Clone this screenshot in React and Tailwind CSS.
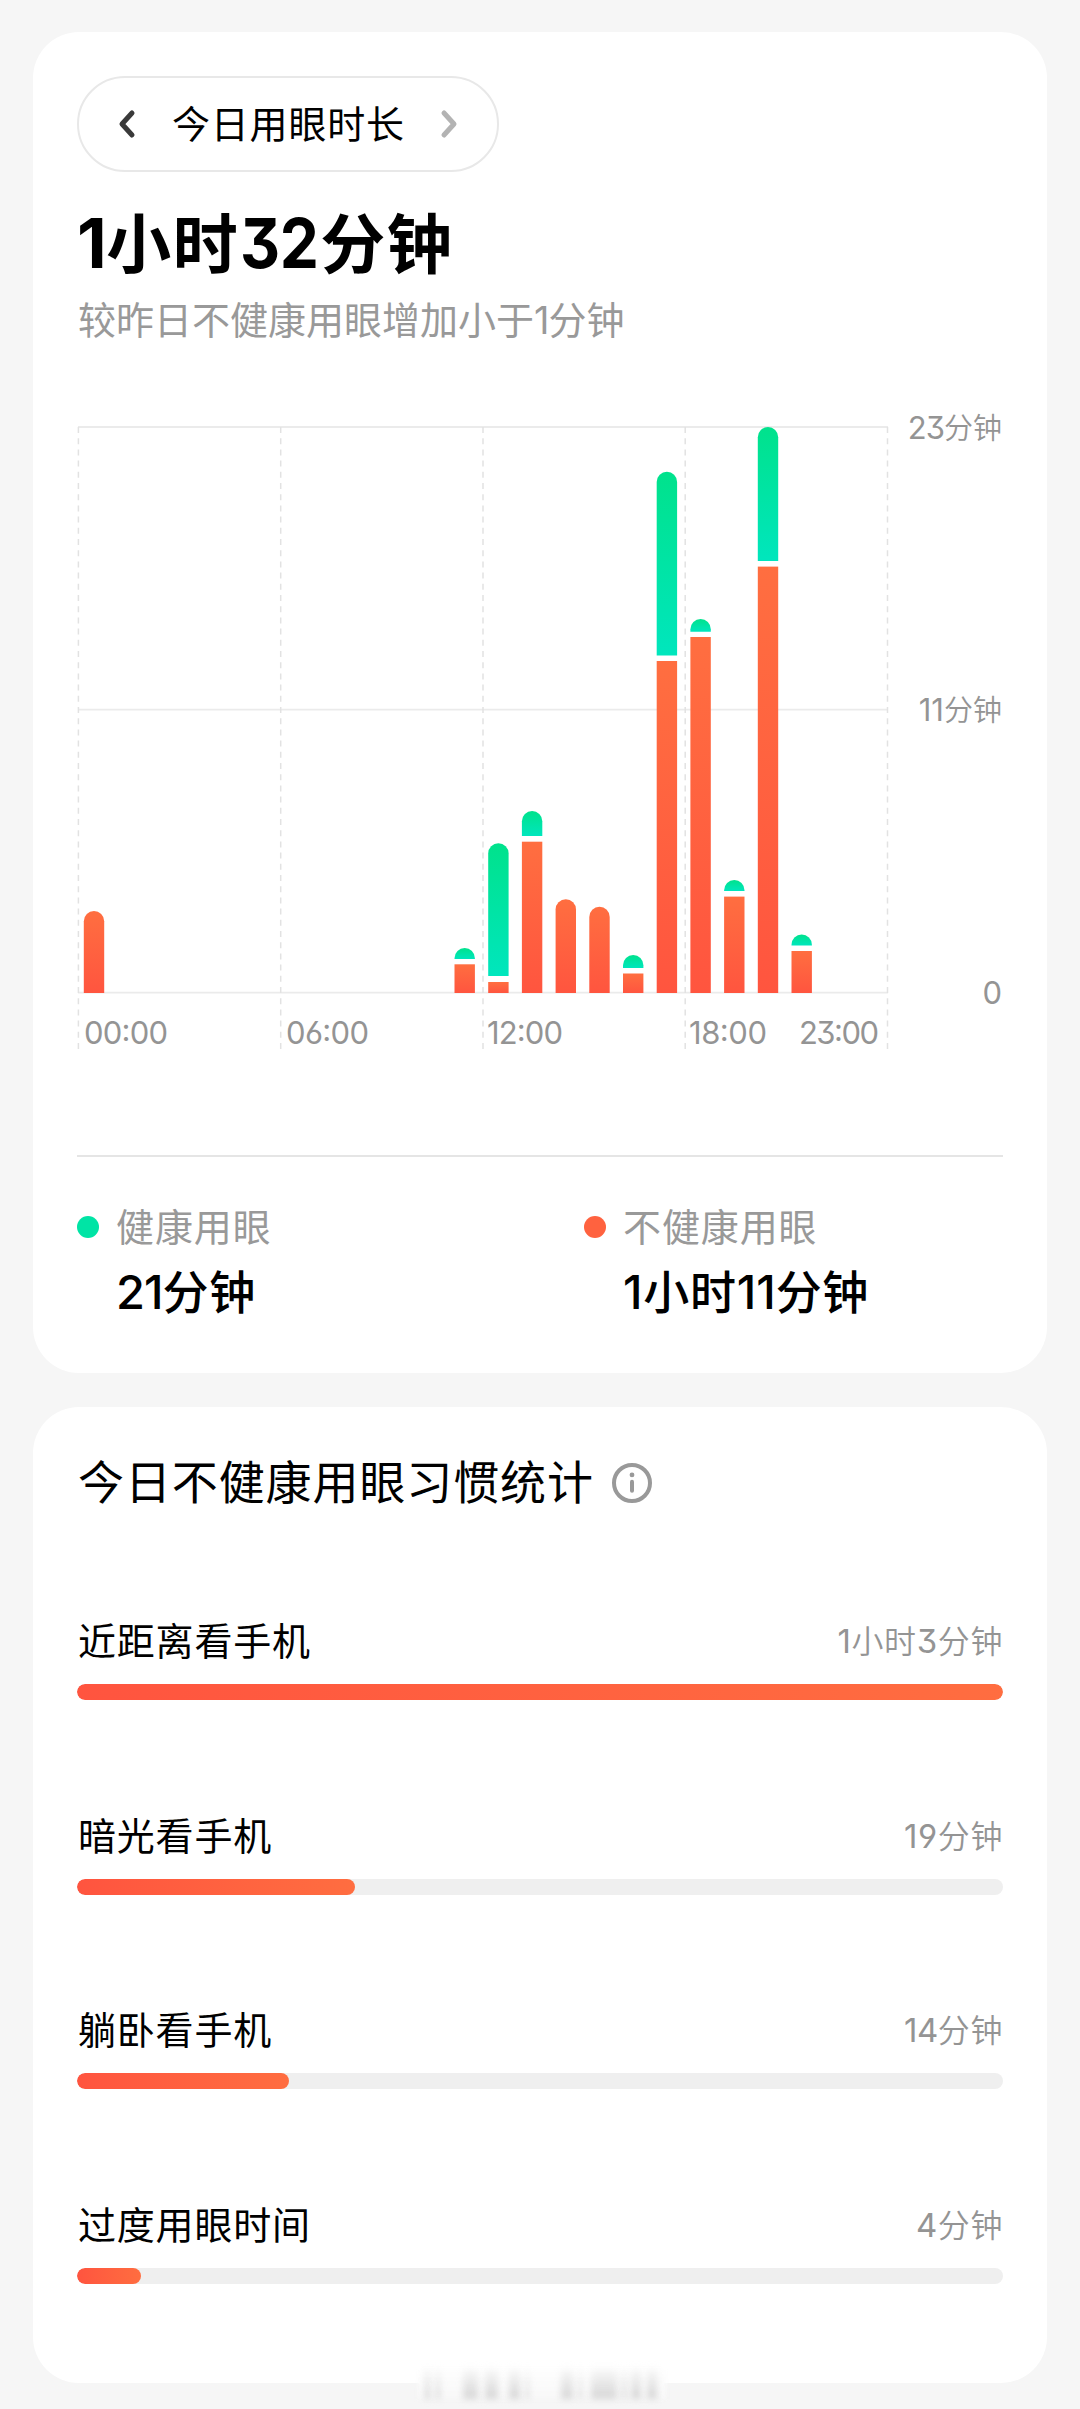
const CJK = '[font-family:"Noto_Sans_CJK_SC",sans-serif]';

const HOURS = [
  { h: 0, top: 911 },
  { h: 11, top: 948, mid: 959, red: 964.3 },
  { h: 12, top: 843.3, mid: 976, red: 982 },
  { h: 13, top: 811, mid: 836, red: 841.7 },
  { h: 14, top: 899.3 },
  { h: 15, top: 906.7 },
  { h: 16, top: 955, mid: 968, red: 973.5 },
  { h: 17, top: 471.7, mid: 655.6, red: 661 },
  { h: 18, top: 619, mid: 631.7, red: 637 },
  { h: 19, top: 880, mid: 891, red: 896.6 },
  { h: 20, top: 427, mid: 561, red: 566.6 },
  { h: 21, top: 934.6, mid: 945.6, red: 951 },
];

const X0 = 77;
const Y0 = 400;
const BASE = 993 - Y0;
const BAR_W = 20.4;
const GRID = [78.4, 280.7, 483, 685.2, 887.5];

function roundedTop(x, y, bottom) {
  const r = BAR_W / 2;
  const b = Math.max(bottom, y + r);
  return `M${x} ${b}V${y + r}a${r} ${r} 0 0 1 ${BAR_W} 0V${b}z`;
}

function Num({ children, className = "" }) {
  return (
    <span className={`font-[Inter] [font-feature-settings:'cv09','cv03','cv04'] ${className}`}>{children}</span>
  );
}

function AxisText({ x, y, w, children }) {
  return (
    <text x={x - X0} y={y - Y0} textLength={w} className="fill-[#949494] font-[Inter] text-[31px] font-normal [font-feature-settings:'cv09','cv03','cv04']">
      {children}
    </text>
  );
}

function Chart() {
  return (
    <svg width="812" height="660" viewBox="0 0 812 660" className="shrink-0">
      <defs>
        <linearGradient id="green" x1="0" y1="0" x2="0" y2="1">
          <stop offset="0" stopColor="#00e28c" />
          <stop offset="1" stopColor="#00e6bd" />
        </linearGradient>
        <linearGradient id="red" x1="0" y1="0" x2="0" y2="1">
          <stop offset="0" stopColor="#ff6e40" />
          <stop offset="1" stopColor="#ff553f" />
        </linearGradient>
      </defs>
      {[427, 709.7, 992.6].map((y) => (
        <line key={y} x1="1" x2="811" y1={y - Y0} y2={y - Y0} stroke="#ebebeb" strokeWidth="1.8" />
      ))}
      {GRID.map((x) => (
        <line key={x} x1={x - X0} x2={x - X0} y1="27" y2="649" stroke="#e2e2e2" strokeWidth="1.5" strokeDasharray="6 5.2" />
      ))}
      {HOURS.map(({ h, top, mid, red }) => {
        const x = 83.8 + 33.7 * h - X0;
        if (!mid) return <path key={h} d={roundedTop(x, top - Y0, BASE)} fill="url(#red)" />;
        return (
          <g key={h}>
            <path d={roundedTop(x, top - Y0, mid - Y0)} fill="url(#green)" />
            <rect x={x} y={red - Y0} width={BAR_W} height={BASE - red + Y0} fill="url(#red)" />
          </g>
        );
      })}
      <AxisText x={84} y={1044} w={84}>00:00</AxisText>
      <AxisText x={286} y={1044} w={83}>06:00</AxisText>
      <AxisText x={487} y={1044} w={76}>12:00</AxisText>
      <AxisText x={689} y={1044} w={78}>18:00</AxisText>
      <AxisText x={799} y={1044} w={80}>23:00</AxisText>
    </svg>
  );
}

function Legend({ dot, label, children }) {
  return (
    <div className="flex w-[507px] shrink-0 gap-[17px]">
      <span className={`mt-[59px] size-[22px] shrink-0 rounded-full ${dot}`} />
      <div>
        <div className="mt-[40px] h-[56px] text-[38px] leading-[56px] tracking-[0.9px] text-[#999]">{label}</div>
        <div className="mt-[6px] flex h-[60px] items-baseline text-[46px] font-medium leading-[60px] tracking-[0.7px] text-black">{children}</div>
      </div>
    </div>
  );
}

function Habit({ label, width, children }) {
  return (
    <div className="h-[194.7px]">
      <div className="flex h-[84px] items-start justify-between">
        <span className="mt-[11px] pl-px text-[38px] leading-[56px] tracking-[0.8px] text-black">{label}</span>
        <span className="mt-[15px] flex items-baseline text-[32px] font-[350] leading-[48px] tracking-[0.6px] text-[#949494]">{children}</span>
      </div>
      <div className="h-4 overflow-hidden rounded-full bg-[#efefef]">
        <div className={`h-4 rounded-full bg-linear-to-r from-[#ff543f] to-[#ff6d40] ${width}`} />
      </div>
    </div>
  );
}

const SMUDGES = [
  { x: 45, w: 5 }, { x: 56, w: 4 }, { x: 83, w: 15 }, { x: 105, w: 13 }, { x: 129, w: 11 }, { x: 146, w: 3 },
  { x: 181, w: 12 }, { x: 199, w: 3 }, { x: 211, w: 26 }, { x: 242, w: 4 }, { x: 251, w: 10 }, { x: 267, w: 10 },
];

export default function App() {
  return (
    <div className={`relative h-[2409px] w-[1080px] overflow-hidden bg-[#f6f6f6] px-[33px] pt-8 ${CJK}`}>
      <section className="h-[1341px] rounded-[46px] bg-white px-11 pt-11">
        <div className="flex h-24 w-[422px] items-center rounded-full border-2 border-[#e8e8e8]">
          <svg width="20" height="32" viewBox="0 0 20 32" fill="none" stroke="#3a3a3a" strokeWidth="5" strokeLinecap="round" strokeLinejoin="round" className="ml-[38px]">
            <path d="M15 5L5 16L15 27" />
          </svg>
          <span className="mb-[5px] ml-[35px] text-[38px] leading-[56px] tracking-[0.8px] text-black">今日用眼时长</span>
          <svg width="20" height="32" viewBox="0 0 20 32" fill="none" stroke="#b3b3b3" strokeWidth="5" strokeLinecap="round" strokeLinejoin="round" className="ml-[34px]">
            <path d="M5 5L15 16L5 27" />
          </svg>
        </div>
        <h1 className="mt-[20px] flex h-[98px] items-baseline text-[65px] font-bold leading-[96px] tracking-[1.5px] text-black">
          <Num className="-mr-[2px] text-[69px]">1</Num>小时<Num className="-mr-[7px] ml-px inline-block origin-left scale-x-90 text-[69px] tracking-[-0.5px]">32</Num>分钟
        </h1>
        <p className="h-[56px] pl-px text-[38px] leading-[56px] text-[#999]">
          较昨日不健康用眼增加小于<Num className="text-[38px] tracking-[-1px]">1</Num>分钟
        </p>
        <div className="mt-[54px] flex h-[757px] border-b-2 border-[#e5e5e5]">
          <Chart />
          <div className="flex w-[114px] flex-col items-end pr-px text-[29px] font-[350] leading-[44px] text-[#949494]">
            <div className="mt-[4px]"><Num className="text-[31px] font-normal tracking-[-1px]">23</Num>分钟</div>
            <div className="mt-[236px]"><Num className="text-[31px] font-normal">11</Num>分钟</div>
            <div className="mt-[237px]"><Num className="text-[31px] font-normal">0</Num></div>
          </div>
        </div>
        <div className="flex">
          <Legend dot="bg-[#00e4a5]" label="健康用眼"><Num className="text-[47px] tracking-[-1px]">21</Num>分钟</Legend>
          <Legend dot="bg-[#ff623f]" label="不健康用眼"><Num className="text-[47px]">1</Num>小时<Num className="text-[47px] tracking-[0px]">11</Num>分钟</Legend>
        </div>
      </section>

      <section className="mt-[34px] h-[976px] rounded-[46px] bg-white px-11 pt-[42px]">
        <div className="flex h-[68px] items-center">
          <h2 className="mb-[8px] pl-px text-[46px] leading-[68px] tracking-[0.9px] text-black">今日不健康用眼习惯统计</h2>
          <svg width="42" height="42" viewBox="0 0 42 42" fill="none" stroke="#999" strokeWidth="4" strokeLinecap="round" className="ml-[17px]">
            <circle cx="21" cy="21" r="18" />
            <path d="M21 19.7V28.7" />
            <circle cx="21" cy="12.9" r="2.4" fill="#999" stroke="none" />
          </svg>
        </div>
        <div className="mt-[83px]">
          <Habit label="近距离看手机" width="w-full"><Num className="text-[33px] font-normal">1</Num>小时<Num className="text-[33px] font-normal">3</Num>分钟</Habit>
          <Habit label="暗光看手机" width="w-[278px]"><Num className="text-[33px] font-normal">19</Num>分钟</Habit>
          <Habit label="躺卧看手机" width="w-[212px]"><Num className="text-[33px] font-normal tracking-[-0.5px]">14</Num>分钟</Habit>
          <Habit label="过度用眼时间" width="w-[64px]"><Num className="text-[33px] font-normal">4</Num>分钟</Habit>
        </div>
      </section>

      <div className="absolute left-[418px] top-[2366px] h-[33px] w-[248px] bg-linear-to-b from-white to-[#f8f8f8] blur-[2px]" />
      <div className="absolute left-[380px] top-[2366px] h-[33px] w-[320px]">
        {SMUDGES.map(({ x, w }) => (
          <span key={x} className="absolute top-0 h-[33px] bg-linear-to-b from-transparent to-[#d6d6d6] blur-[3px]" style={{ left: x, width: w }} />
        ))}
      </div>
    </div>
  );
}
